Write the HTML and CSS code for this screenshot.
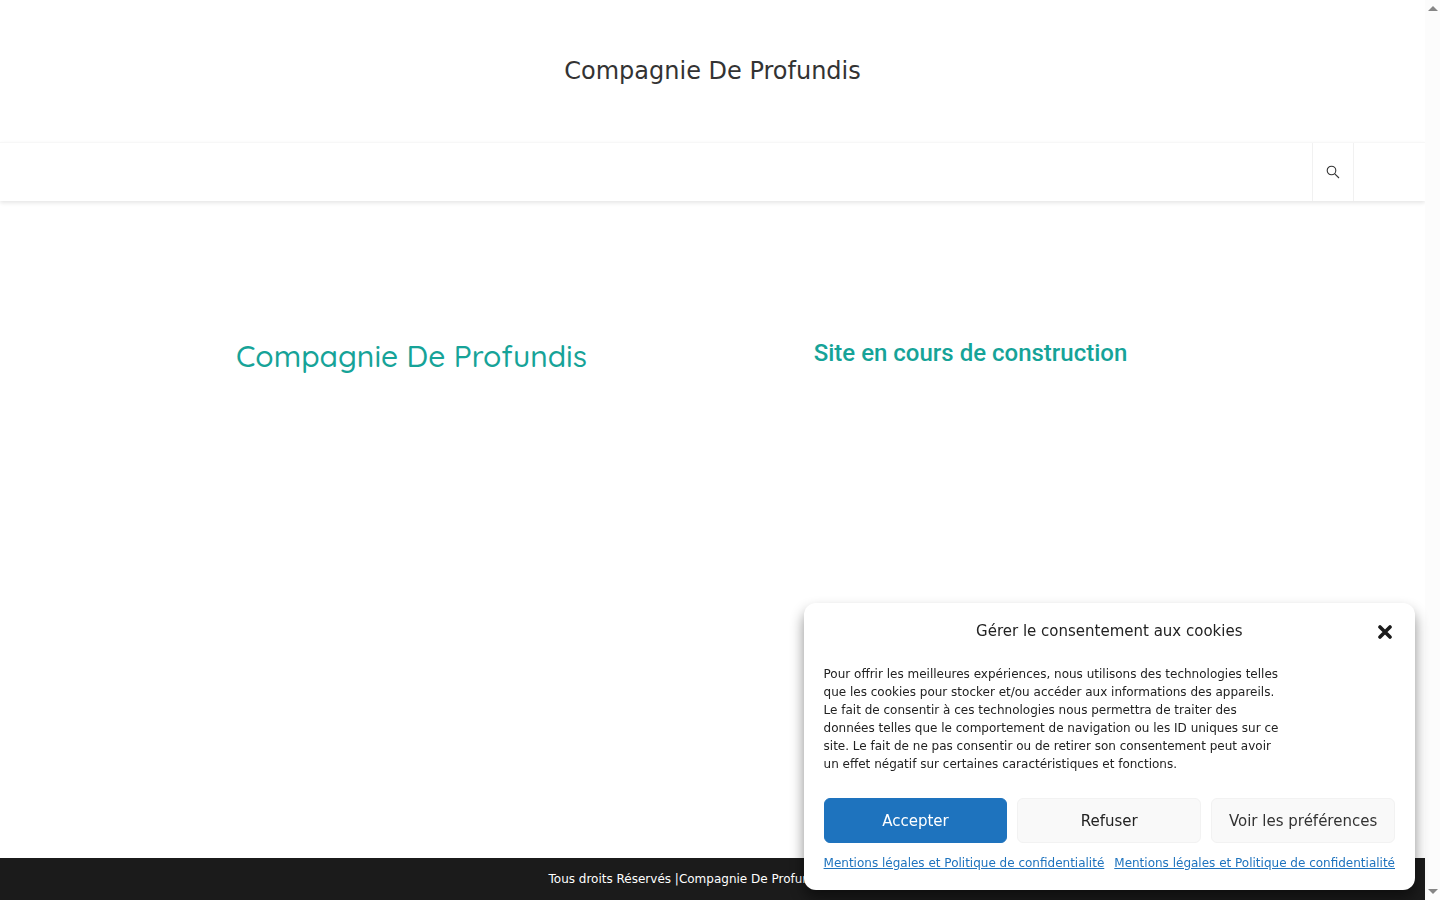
FILE: index.html
```
<!DOCTYPE html>
<html lang="fr">
<head>
    <meta charset="UTF-8">
    <meta name="viewport" content="width=device-width, initial-scale=1.0">
    <title>Compagnie De Profundis</title>
    <link rel="stylesheet" href="styles.css">
</head>
<body>
    <div class="page">
        <header class="header">
            <a href="#" class="site-title">Compagnie De Profundis</a>
        </header>

        <nav class="navbar">
            <div class="navbar-inner">
                <button type="button" class="search-toggle" aria-label="Rechercher">
                    <svg width="14" height="14" viewBox="0 0 14 14" fill="none" stroke="#333" stroke-width="1.1">
                        <circle cx="5.5" cy="5.5" r="4.3"/>
                        <path d="M8.8 8.8L13 13"/>
                    </svg>
                </button>
            </div>
        </nav>

        <main class="content">
            <h1 class="company">Compagnie De Profundis</h1>
            <h2 class="notice">Site en cours de construction</h2>
        </main>

        <footer class="footer">
            <p>Tous droits Réservés |Compagnie De Profundis</p>
        </footer>
    </div>

    <!-- Scrollbar track -->
    <div class="scrollbar">
        <span class="arrow arrow-up"></span>
        <span class="arrow arrow-down"></span>
    </div>

    <!-- Cookie consent -->
    <div class="cookie-banner" role="dialog" aria-labelledby="cookieTitle">
        <div class="cookie-header">
            <div class="cookie-title" id="cookieTitle">Gérer le consentement aux cookies</div>
            <button type="button" class="cookie-close" aria-label="Fermer">
                <svg width="14" height="14" viewBox="0 0 14 14" stroke="#1b1b1b" stroke-width="3.6" stroke-linecap="round">
                    <path d="M2 2L12 12M12 2L2 12"/>
                </svg>
            </button>
        </div>
        <p class="cookie-text">Pour offrir les meilleures expériences, nous utilisons des technologies telles que les cookies pour stocker et/ou accéder aux informations des appareils. Le fait de consentir à ces technologies nous permettra de traiter des données telles que le comportement de navigation ou les ID uniques sur ce site. Le fait de ne pas consentir ou de retirer son consentement peut avoir un effet négatif sur certaines caractéristiques et fonctions.</p>
        <div class="cookie-buttons">
            <button type="button" class="btn btn-accept">Accepter</button>
            <button type="button" class="btn btn-deny">Refuser</button>
            <button type="button" class="btn btn-prefs">Voir les préférences</button>
        </div>
        <div class="cookie-links">
            <a href="#">Mentions légales et Politique de confidentialité</a>
            <a href="#">Mentions légales et Politique de confidentialité</a>
        </div>
    </div>
</body>
</html>
```
FILE: styles.css
```
* {
    box-sizing: border-box;
}
body {
    display: flex;
    min-height: 100vh;
    margin: 0;
    background-color: #fff;
    color: #222;
    font-family: "DejaVu Sans", sans-serif;
    font-size: 12px;
    line-height: 18px;
}
h1, h2, p {
    margin: 0;
}
button {
    font-family: inherit;
    cursor: pointer;
}
.page {
    display: flex;
    flex: 1;
    flex-direction: column;
}
.header {
    padding: 56px 20px;
    text-align: center;
}
.site-title {
    display: block;
    color: #333;
    font-size: 24px;
    line-height: 30px;
    text-decoration: none;
}
.navbar {
    border-top: 1px solid #f7f7f7;
    box-shadow: 0 2px 4px rgba(0, 0, 0, 0.1);
}
.navbar-inner {
    display: flex;
    justify-content: flex-end;
    width: 90%;
    margin: 0 auto;
}
.search-toggle {
    display: flex;
    align-items: center;
    justify-content: center;
    width: 42px;
    height: 58px;
    padding: 0;
    background: none;
    border: solid #f1f1f1;
    border-width: 0 1px;
}
.content {
    display: grid;
    flex: 1;
    grid-template-columns: 1fr 1fr;
    align-items: start;
    padding: 136px 175px 0 132px;
    color: #16a398;
    text-align: center;
}
.company {
    font-family: Quicksand, Inter, sans-serif;
    font-size: 30px;
    font-weight: 500;
    line-height: 38px;
}
.notice {
    font-family: Roboto, sans-serif;
    font-size: 24px;
    font-weight: 500;
    line-height: 32px;
}
.footer {
    padding: 12px 0;
    background-color: #1b1b1b;
    color: #fff;
}
.footer p {
    width: 328px;
    margin: 0 auto;
}
.scrollbar {
    display: flex;
    flex-direction: column;
    justify-content: space-between;
    align-items: center;
    width: 15px;
    padding: 6px 0;
    background-color: #fcfcfc;
}
.arrow {
    border: 5px solid transparent;
}
.arrow-up {
    border-top: 0;
    border-bottom-color: #868686;
}
.arrow-down {
    border-bottom: 0;
    border-top-color: #868686;
}
.cookie-banner {
    position: fixed;
    right: 25px;
    bottom: 10px;
    display: grid;
    gap: 10px;
    padding: 14px 20px 18px;
    background-color: #fff;
    border-radius: 12px;
    box-shadow: 0 8px 14px rgba(0, 0, 0, 0.45);
}
.cookie-header {
    display: grid;
    grid-template-columns: 20px 1fr 20px;
    align-items: center;
}
.cookie-title {
    grid-column: 2;
    font-size: 15px;
    line-height: 28px;
    text-align: center;
}
.cookie-close {
    display: flex;
    justify-content: center;
    padding: 2px 0 0;
    background: none;
    border: 0;
}
.cookie-text {
    max-width: 460px;
    padding: 10px 0 15px;
}
.cookie-buttons {
    display: grid;
    grid-template-columns: repeat(3, 1fr);
    gap: 10px;
}
.btn {
    height: 45px;
    padding: 0 10px;
    background-color: #f9f9f9;
    border: 1px solid #f2f2f2;
    border-radius: 6px;
    color: #222;
    font-size: 15px;
    white-space: nowrap;
}
.btn-accept {
    background-color: #1e73be;
    border-color: #1e73be;
    color: #fff;
}
.btn-prefs {
    color: #333;
}
.cookie-links {
    display: flex;
    gap: 10px;
    padding-top: 1px;
}
.cookie-links a {
    color: #1e73be;
    white-space: nowrap;
}
```
